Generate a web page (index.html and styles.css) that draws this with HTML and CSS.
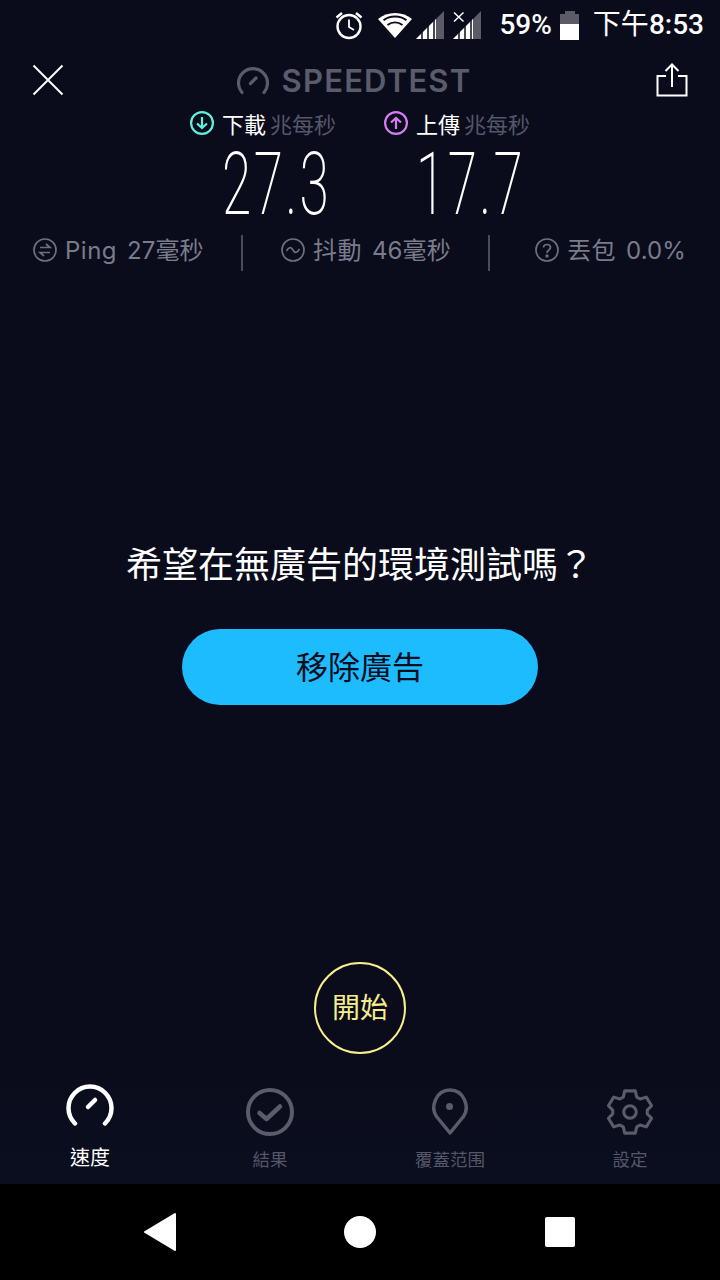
FILE: index.html
```html
<!DOCTYPE html>
<html lang="zh-Hant">
<head>
<meta charset="utf-8">
<title>Speedtest</title>
<link rel="stylesheet" href="styles.css">
</head>
<body>
<div class="screen">
  <div class="status">
    <svg class="st-alarm" width="30" height="30" viewBox="0 0 30 30" fill="none" stroke="#fff"><circle cx="15" cy="16.500" r="11.500" stroke-width="2.400"/><path d="M15 9.500V17l5 3" stroke-width="1.800"/><path d="M2.500 7.500L8 3M27.500 7.500L22 3" stroke-width="2.400"/></svg>
    <svg class="st-wifi" width="36" height="28" viewBox="0 0 36 28"><path d="M18 27L1 8C10 0 26 0 35 8Z" fill="#fff"/><path d="M6.500 9.200C13 4.300 23 4.300 29.500 9.200M10.500 14C15 10.800 21 10.800 25.500 14" stroke="#0a0c1c" stroke-width="2" fill="none"/></svg>
    <svg class="st-sig" width="28" height="28" viewBox="0 0 28 28"><path d="M0 28L28 0V28Z" fill="#5b5b68"/><path d="M0 28L20 8V28Z" fill="#fff"/><path d="M6 28V20M12 28V14M18 28V8" stroke="#0a0c1c" stroke-width="1.500"/></svg>
    <svg class="st-sig2" width="28" height="28" viewBox="0 0 28 28"><path d="M0 28L28 0V28Z" fill="#5b5b68"/><path d="M0 28L20 8V28Z" fill="#fff"/><path d="M6 28V20M12 28V14M18 28V8" stroke="#0a0c1c" stroke-width="1.500"/><path d="M1 1L11 11M11 1L1 11" stroke="#0a0c1c" stroke-width="5"/><path d="M1 1.500L10.500 10.500M10.500 1.500L1 10.500" stroke="#fff" stroke-width="1.500"/></svg>
    <span class="st-batt-text">59%</span>
    <span class="st-batt"><span class="st-batt-cap"></span><span class="st-batt-body"><span class="st-batt-fill"></span></span></span>
    <span class="st-time"><span class="st-time-cjk">下午</span>8:53</span>
  </div>

  <header class="head">
    <svg width="32" height="32" viewBox="0 0 32 32" stroke="#fff" stroke-width="2" fill="none"><path d="M1.500 1.500L30.500 30.500M30.500 1.500L1.500 30.500"/></svg>
    <div class="logo">
      <svg width="32" height="29" viewBox="0 0 32 29" fill="none" stroke="#5a5b6b" stroke-width="3.200" stroke-linecap="round"><path d="M5 26.500A14.500 14.500 0 1 1 27 26.500"/><path d="M13.500 17.500L19 12"/></svg>
      <span>SPEEDTEST</span>
    </div>
    <svg width="32" height="34" viewBox="0 0 32 34" stroke="#fff" stroke-width="2" fill="none"><path d="M10 13H1.500V32.500H30.500V13H22"/><path d="M16 24V2M9.500 8L16 1.500L22.500 8"/></svg>
  </header>

  <section class="speeds">
    <div class="speed">
      <div class="speed-label">
        <svg width="24" height="24" viewBox="0 0 24 24" fill="none" stroke="#5ff0e0" stroke-width="2.200"><circle cx="12" cy="12" r="10.900"/><path d="M12 6V17M7 12.500L12 17L17 12.500"/></svg>
        <span class="lbl">下載</span><span class="unit">兆每秒</span>
      </div>
      <div class="speed-num">27.3</div>
    </div>
    <div class="speed">
      <div class="speed-label">
        <svg width="24" height="24" viewBox="0 0 24 24" fill="none" stroke="#d57cf5" stroke-width="2.200"><circle cx="12" cy="12" r="10.900"/><path d="M12 18V7M7 11.500L12 7L17 11.500"/></svg>
        <span class="lbl">上傳</span><span class="unit">兆每秒</span>
      </div>
      <div class="speed-num">17.7</div>
    </div>
  </section>

  <section class="metrics">
    <div class="metric m1">
      <svg width="24" height="24" viewBox="0 0 24 24" fill="none" stroke="#6d6e7e" stroke-width="1.700"><circle cx="12" cy="12" r="11"/><path d="M7 9.500H17L13 6M17 14.500H7L11 18"/></svg>
      <span class="m-name">Ping</span><span class="m-val">27毫秒</span>
    </div>
    <div class="sep"></div>
    <div class="metric m2">
      <svg width="24" height="24" viewBox="0 0 24 24" fill="none" stroke="#6d6e7e" stroke-width="1.700"><circle cx="12" cy="12" r="11"/><path d="M5.500 13C8 8.500 10.500 9 12 12C13.500 15 16 15.500 18.500 11"/></svg>
      <span class="m-name">抖動</span><span class="m-val">46毫秒</span>
    </div>
    <div class="sep"></div>
    <div class="metric m3">
      <svg width="24" height="24" viewBox="0 0 24 24" fill="none" stroke="#6d6e7e" stroke-width="1.700"><circle cx="12" cy="12" r="11"/><path d="M8.500 9.500C8.500 5.500 15.500 5.500 15.500 9.500C15.500 12 12 12 12 15"/><circle cx="12" cy="18" r=".8" fill="#6d6e7e"/></svg>
      <span class="m-name">丟包</span><span class="m-val">0.0%</span>
    </div>
  </section>

  <section class="promo">
    <p class="promo-text">希望在無廣告的環境測試嗎？</p>
    <button class="promo-btn">移除廣告</button>
  </section>

  <div class="start-wrap"><button class="start">開始</button></div>

  <nav class="tabs">
    <div class="tab active">
      <svg class="ic-speed" width="48" height="42" viewBox="0 0 48 42" fill="none" stroke="#fff" stroke-width="4.500" stroke-linecap="round"><path d="M9 39.500A21.500 21.500 0 1 1 39 39.500"/><path d="M22 23L29 16"/></svg>
      <span>速度</span>
    </div>
    <div class="tab">
      <svg width="48" height="48" viewBox="0 0 48 48" fill="none" stroke="#5a5b6b" stroke-width="4"><circle cx="24" cy="24" r="22"/><path d="M13.500 25L20.500 31L34 18.500" stroke-width="4.500" stroke-linecap="round" stroke-linejoin="round"/></svg>
      <span>結果</span>
    </div>
    <div class="tab">
      <svg width="48" height="48" viewBox="0 0 48 48" fill="none" stroke="#5a5b6b" stroke-width="3.500"><path d="M24 45L10.500 28.500C4 19 10 2 24 2C38 2 44 19 37.500 28.500Z" stroke-linejoin="round"/><circle cx="23.500" cy="18.500" r="3.500" fill="#5a5b6b" stroke="none"/></svg>
      <span>覆蓋范围</span>
    </div>
    <div class="tab">
      <svg width="48" height="48" viewBox="0 0 50 50" fill="none" stroke="#5a5b6b" stroke-width="3.200" stroke-linejoin="round"><path d="M19.500 3H30.500L32 9.500L35.500 11.500L42 9.500L47.500 18.500L43 23V27L47.500 31.500L42 40.500L35.500 38.500L32 40.500L30.500 47H19.500L18 40.500L14.500 38.500L8 40.500L2.500 31.500L7 27V23L2.500 18.500L8 9.500L14.500 11.500L18 9.500Z"/><circle cx="25" cy="25" r="6.500"/></svg>
      <span>設定</span>
    </div>
  </nav>

  <div class="sysnav">
    <svg width="34" height="40" viewBox="0 0 34 40"><path d="M32 2V38L2 20Z" fill="#fff" stroke="#fff" stroke-width="2" stroke-linejoin="round"/></svg>
    <span class="sys-home"></span>
    <span class="sys-recent"></span>
  </div>
</div>
</body>
</html>
```

FILE: styles.css
```css
* { box-sizing: border-box; }
html, body { margin: 0; padding: 0; background: #0a0c1c; }
body { font-family: "Noto Sans CJK TC", "Noto Sans", sans-serif; color: #fff; }
.screen { width: 720px; height: 1280px; display: flex; flex-direction: column; overflow: hidden; background: #0a0c1c; }

.status { height: 50px; flex: none; display: flex; align-items: center; justify-content: flex-end; padding: 0 16px 0 0; font-family: "Roboto", "Noto Sans CJK TC", sans-serif; font-size: 28px; font-weight: 500; }
.st-alarm { margin-right: 13px; }
.st-wifi { margin-right: 3px; }
.st-sig { margin-right: 9px; }
.st-sig2 { margin-right: 18px; }
.st-batt-text { margin-right: 8px; font-size: 28px; line-height: 50px; }
.st-batt { display: flex; flex-direction: column; align-items: center; width: 20px; height: 29px; margin-right: 13px; }
.st-batt-cap { width: 10px; height: 3px; background: #5b5b68; flex: none; }
.st-batt-body { width: 19px; flex: 1; background: #5b5b68; display: flex; align-items: flex-end; }
.st-batt-fill { width: 100%; height: 16px; background: #fff; }
.st-time { font-weight: 500; font-size: 28px; line-height: 50px; }
.st-time-cjk { font-weight: 400; }

.head { height: 60px; flex: none; display: flex; align-items: center; justify-content: space-between; padding: 0 32px; }
.logo { display: flex; align-items: center; gap: 13px; color: #5a5b6b; font-family: "Inter", sans-serif; font-weight: 600; font-size: 31px; letter-spacing: 1.200px; margin-right: 12px; }

.speeds { display: flex; justify-content: center; gap: 48px; margin-top: -2px; }
.speed { width: 146px; display: flex; flex-direction: column; align-items: flex-start; }
.speed-label { display: flex; align-items: center; height: 30px; white-space: nowrap; }
.speed-label svg { margin-right: 8px; }
.lbl { font-size: 22px; line-height: 30px; color: #fff; margin-right: 4px; }
.unit { font-size: 22px; line-height: 30px; color: #55566a; }
.speed-num { font-family: "Roboto", sans-serif; font-weight: 200; font-size: 87px; line-height: 70px; height: 70px; margin-top: 11px; margin-left: 32px; letter-spacing: 4px; transform: scaleX(.61); transform-origin: left center; white-space: nowrap; }

.metrics { display: flex; align-items: center; height: 36px; margin-top: 16px; padding-left: 33px; color: #7a7b8b; font-size: 24px; line-height: 30px; }
.metric { display: flex; align-items: center; white-space: nowrap; padding-bottom: 5px; }
.metric svg { margin-right: 8px; margin-top: -1px; }
.m-name { margin-right: 10px; font-family: "Inter", "Noto Sans CJK TC", sans-serif; letter-spacing: .5px; }
.m-val { font-family: "Inter", "Noto Sans CJK TC", sans-serif; letter-spacing: .1px; }
.sep { width: 2px; height: 36px; background: #4a4b5c; }
.m1 { width: 208px; }
.m2 { width: 245px; padding-left: 38px; }
.m3 { padding-left: 45px; }

.promo { height: 412px; padding-top: 264px; display: flex; flex-direction: column; align-items: center; }
.promo-text { margin: 0; font-size: 36px; line-height: 54px; }
.promo-btn { width: 356px; height: 76px; margin-top: 40px; padding: 0 0 5px; border: 0; border-radius: 38px; background: #1cbcff; color: #0a0c1c; font-family: inherit; font-size: 32px; flex: none; }

.start-wrap { display: flex; justify-content: center; margin-top: 279px; }
.start { width: 92px; height: 92px; border: 2px solid #f5ee8d; border-radius: 50%; background: transparent; color: #f5ee8d; font-family: inherit; font-size: 28px; padding: 0 0 4px; }

.tabs { height: 130px; flex: none; display: grid; grid-template-columns: repeat(4, 180px); padding-top: 30px; background: linear-gradient(#0a0c1c, #0b0e1e); }
.tab { display: flex; flex-direction: column; align-items: center; padding-top: 4px; color: #55566a; font-size: 17.500px; }
.tab svg { height: 48px; flex: none; }
.tab span { margin-top: 8px; line-height: 30px; }
.tab.active { color: #fff; font-size: 20px; padding-top: 0; }
.tab.active .ic-speed { height: 42px; }
.tab.active span { margin-top: 16px; }

.sysnav { flex: 1; background: #000; display: flex; align-items: center; }
.sysnav svg { margin-left: 143px; }
.sys-home { width: 32px; height: 32px; border-radius: 50%; background: #fff; margin-left: 167px; }
.sys-recent { width: 30px; height: 30px; border-radius: 2px; background: #fff; margin-left: 169px; }
```
